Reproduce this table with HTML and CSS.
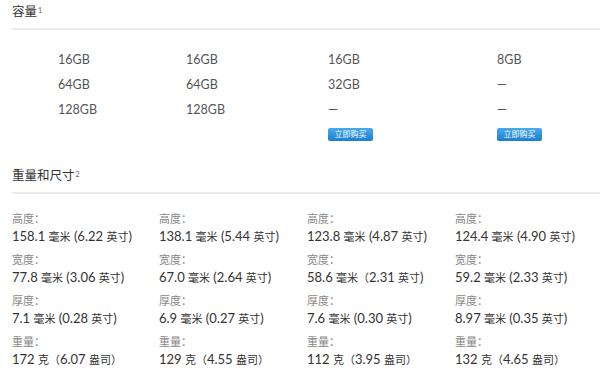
FILE: index.html
```html
<!DOCTYPE html>
<html lang="zh-CN">
<head>
<meta charset="utf-8">
<title>容量 与 重量和尺寸</title>
<link rel="stylesheet" href="styles.css">
</head>
<body>
<section class="sec sec-cap">
  <h2 class="sec-title">容量<sup>1</sup></h2>
  <div class="cap-grid">
    <div class="cap-col">
      <div class="cap-item">16GB</div>
      <div class="cap-item">64GB</div>
      <div class="cap-item">128GB</div>
    </div>
    <div class="cap-col">
      <div class="cap-item">16GB</div>
      <div class="cap-item">64GB</div>
      <div class="cap-item">128GB</div>
    </div>
    <div class="cap-col">
      <div class="cap-item">16GB</div>
      <div class="cap-item">32GB</div>
      <div class="cap-item">—</div>
      <a class="buy" href="#">立即购买</a>
    </div>
    <div class="cap-col">
      <div class="cap-item">8GB</div>
      <div class="cap-item">—</div>
      <div class="cap-item">—</div>
      <a class="buy" href="#">立即购买</a>
    </div>
  </div>
</section>
<section class="sec sec-dim">
  <h2 class="sec-title">重量和尺寸<sup>2</sup></h2>
  <div class="dim-grid">
    <dl class="dim-col">
      <dt>高度：</dt><dd>158.1 <span class="u">毫米</span> (6.22 <span class="u">英寸</span>)</dd>
      <dt>宽度：</dt><dd>77.8 <span class="u">毫米</span> (3.06 <span class="u">英寸</span>)</dd>
      <dt>厚度：</dt><dd>7.1 <span class="u">毫米</span> (0.28 <span class="u">英寸</span>)</dd>
      <dt>重量：</dt><dd>172 <span class="u">克（</span>6.07 <span class="u">盎司）</span></dd>
    </dl>
    <dl class="dim-col">
      <dt>高度：</dt><dd>138.1 <span class="u">毫米</span> (5.44 <span class="u">英寸</span>)</dd>
      <dt>宽度：</dt><dd>67.0 <span class="u">毫米</span> (2.64 <span class="u">英寸</span>)</dd>
      <dt>厚度：</dt><dd>6.9 <span class="u">毫米</span> (0.27 <span class="u">英寸</span>)</dd>
      <dt>重量：</dt><dd>129 <span class="u">克（</span>4.55 <span class="u">盎司）</span></dd>
    </dl>
    <dl class="dim-col">
      <dt>高度：</dt><dd>123.8 <span class="u">毫米</span> (4.87 <span class="u">英寸</span>)</dd>
      <dt>宽度：</dt><dd>58.6 <span class="u">毫米（</span>2.31 <span class="u">英寸</span>)</dd>
      <dt>厚度：</dt><dd>7.6 <span class="u">毫米</span> (0.30 <span class="u">英寸</span>)</dd>
      <dt>重量：</dt><dd>112 <span class="u">克（</span>3.95 <span class="u">盎司）</span></dd>
    </dl>
    <dl class="dim-col">
      <dt>高度：</dt><dd>124.4 <span class="u">毫米</span> (4.90 <span class="u">英寸</span>)</dd>
      <dt>宽度：</dt><dd>59.2 <span class="u">毫米</span> (2.33 <span class="u">英寸</span>)</dd>
      <dt>厚度：</dt><dd>8.97 <span class="u">毫米</span> (0.35 <span class="u">英寸</span>)</dd>
      <dt>重量：</dt><dd>132 <span class="u">克（</span>4.65 <span class="u">盎司）</span></dd>
    </dl>
  </div>
</section>
</body>
</html>
```
FILE: styles.css
```css
html, body {
  margin: 0;
  padding: 0;
  background: #fff;
}
body {
  font-family: "Lato", "Noto Sans CJK SC", sans-serif;
  color: #333;
  width: 600px;
  overflow: hidden;
}
.sec {
  padding-left: 12px;
}
.sec-title {
  margin: 0;
  font-size: 12.5px;
  font-weight: normal;
  line-height: 18px;
  color: #333;
  padding-bottom: 7px;
  border-bottom: 2px solid #ececec;
}
.sec-cap .sec-title {
  padding-top: 3px;
}
.sec-title sup {
  font-size: 7px;
  color: #666;
  vertical-align: top;
  position: relative;
  top: -2px;
  margin-left: 1px;
}
.cap-grid {
  display: grid;
  grid-template-columns: 128px 142px 169px 1fr;
  padding-left: 46px;
  padding-top: 17px;
}
.cap-item {
  font-size: 12.5px;
  line-height: 25px;
  color: #555;
  height: 25px;
}
.buy {
  display: block;
  width: 45px;
  height: 13px;
  margin-top: 6px;
  border-radius: 2px;
  background: linear-gradient(#49a9ef, #1a7ed0);
  color: #fff;
  font-size: 8px;
  line-height: 13px;
  text-align: center;
  text-decoration: none;
}
.sec-dim {
  padding-top: 26px;
}
.dim-grid {
  display: grid;
  grid-template-columns: 147px 148px 148px 1fr;
  padding-top: 17px;
}
.dim-col {
  margin: 0;
}
.dim-col dt {
  font-size: 11px;
  line-height: 15px;
  color: #888;
}
.dim-col dd {
  margin: 0 0 5px 0;
  font-size: 13px;
  line-height: 20px;
  color: #333;
}
.dim-col .u {
  font-size: 11px;
}
```
